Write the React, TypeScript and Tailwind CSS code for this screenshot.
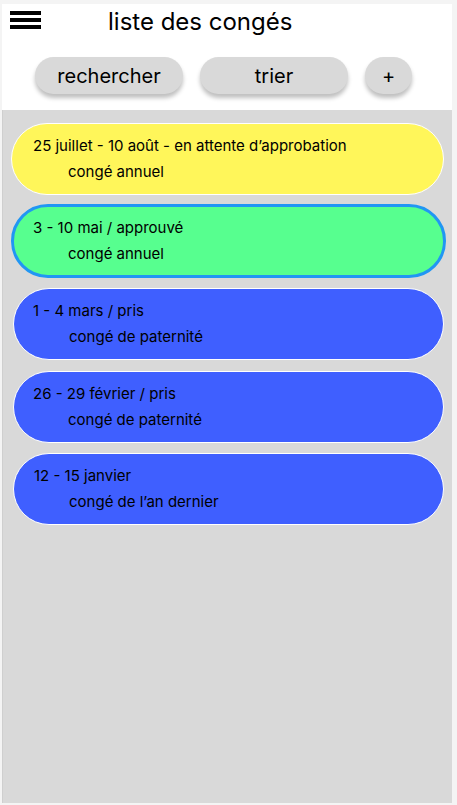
import React from 'react';

type Leave = {
    dates: string;
    kind: string;
    tone: string;
    lead: string;
    indent: string;
};

const leaves: Leave[] = [
    {
        dates: '25 juillet - 10 août - en attente d’approbation',
        kind: 'congé annuel',
        tone: 'h-[72px] bg-[#fff65a] border border-white mx-[8px]',
        lead: 'pl-[21px]',
        indent: 'pl-[35px]',
    },
    {
        dates: '3 - 10 mai / approuvé',
        kind: 'congé annuel',
        tone: 'h-[74px] mt-[9px] bg-[#57ff8f] border-[3px] border-[#2196f3] ml-[8px] mr-[6px]',
        lead: 'pl-[19px]',
        indent: 'pl-[35px]',
    },
    {
        dates: '1 - 4 mars / pris',
        kind: 'congé de paternité',
        tone: 'h-[72px] mt-[10px] bg-[#3f5fff] border border-white ml-[10px] mr-[8px]',
        lead: 'pl-[19px]',
        indent: 'pl-[36px]',
    },
    {
        dates: '26 - 29 février / pris',
        kind: 'congé de paternité',
        tone: 'h-[72px] mt-[11px] bg-[#3f5fff] border border-white ml-[10px] mr-[8px]',
        lead: 'pl-[19px]',
        indent: 'pl-[35px]',
    },
    {
        dates: '12 - 15 janvier',
        kind: 'congé de l’an dernier',
        tone: 'h-[72px] mt-[10px] bg-[#3f5fff] border border-white ml-[10px] mr-[8px]',
        lead: 'pl-[20px]',
        indent: 'pl-[35px]',
    },
];

function PillButton({ label, width }: { label: string; width: string }) {
    return (
        <button
            className={`${width} h-[37px] rounded-full bg-[#d9d9d9] text-[20px] text-black shadow-[0_4px_4px_rgba(0,0,0,0.25)]`}>
            {label}
        </button>
    );
}

export default function App() {
    return (
        <div
            className="w-[457px] h-[805px] bg-[#f4f4f4] pt-[4px] pl-[2px]"
            style={{ fontFamily: 'Inter, "Noto Sans", sans-serif' }}>
            <div className="w-[450px] h-[799px] flex flex-col bg-white">
                {/* header */}
                <div className="h-[106px] shrink-0">
                    <div className="flex items-start h-[40px]">
                        <div className="mt-[7px] ml-[8px] flex flex-col gap-[3px]">
                            <span className="block w-[31px] h-[4px] bg-black" />
                            <span className="block w-[31px] h-[4px] bg-black" />
                            <span className="block w-[31px] h-[4px] bg-black" />
                        </div>
                        <h1 className="ml-[67px] mt-[1px] text-[24px] leading-[34px] text-black">
                            liste des congés
                        </h1>
                    </div>
                    <div className="flex mt-[13px] pl-[33px] gap-[17px]">
                        <PillButton label="rechercher" width="w-[148px]" />
                        <PillButton label="trier" width="w-[148px]" />
                        <PillButton label="+" width="w-[47px]" />
                    </div>
                </div>

                {/* list */}
                <div className="flex-1 bg-[#d9d9d9] border-l border-[#cfcfcf] pt-[13px] flex flex-col">
                    {leaves.map((leave, index) => (
                        <div
                            key={index}
                            className={`shrink-0 rounded-full ${leave.tone} ${leave.lead} flex flex-col justify-center text-[15px] text-black`}>
                            <div className="leading-[20px]">{leave.dates}</div>
                            <div className={`${leave.indent} mt-[6px] leading-[20px]`}>
                                {leave.kind}
                            </div>
                        </div>
                    ))}
                </div>
            </div>
        </div>
    );
}
